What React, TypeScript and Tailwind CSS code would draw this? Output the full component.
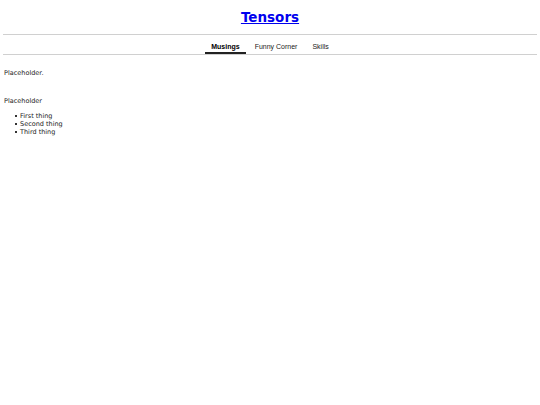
import React, { useState } from 'react';

const tabs = ['Musings', 'Funny Corner', 'Skills'];

export default function App() {
  const [active, setActive] = useState('Musings');

  return (
    <div className="min-h-screen bg-white px-[3px] text-black antialiased">
      {/* Site title */}
      <header className="pt-[9px] pb-[9px] text-center">
        <h1 className="text-[13.5px] leading-[16px] font-bold font-['DejaVu_Sans',Verdana,sans-serif]">
          <a href="#" className="text-[#0000ee] underline">Tensors</a>
        </h1>
      </header>

      {/* Tab bar */}
      <nav className="flex justify-center gap-[2px] border-y border-[#d0d0d0] font-['Liberation_Sans',Arial,sans-serif] text-[7px] leading-[8px]">
        {tabs.map(t => (
          <button
            key={t}
            onClick={() => setActive(t)}
            className={`px-[6.5px] pt-[8px] pb-[1px] border-b-2 ${
              active === t ? 'border-[#222] font-bold text-black' : 'border-transparent text-[#222]'
            }`}
          >
            {t}
          </button>
        ))}
      </nav>

      {/* Page body */}
      <main className="font-['DejaVu_Sans',Verdana,sans-serif] text-[6.5px] leading-[8px] text-[#222]">
        <p className="mt-[14px] pl-px">Placeholder.</p>
        <p className="mt-[20px] pl-px">Placeholder</p>
        <ul className="mt-[7px] pl-[12px]">
          {['First thing', 'Second thing', 'Third thing'].map(item => (
            <li key={item} className="flex items-center">
              <span className="mr-[3px] h-[2px] w-[2px] bg-[#333]" />
              {item}
            </li>
          ))}
        </ul>
      </main>
    </div>
  );
}
